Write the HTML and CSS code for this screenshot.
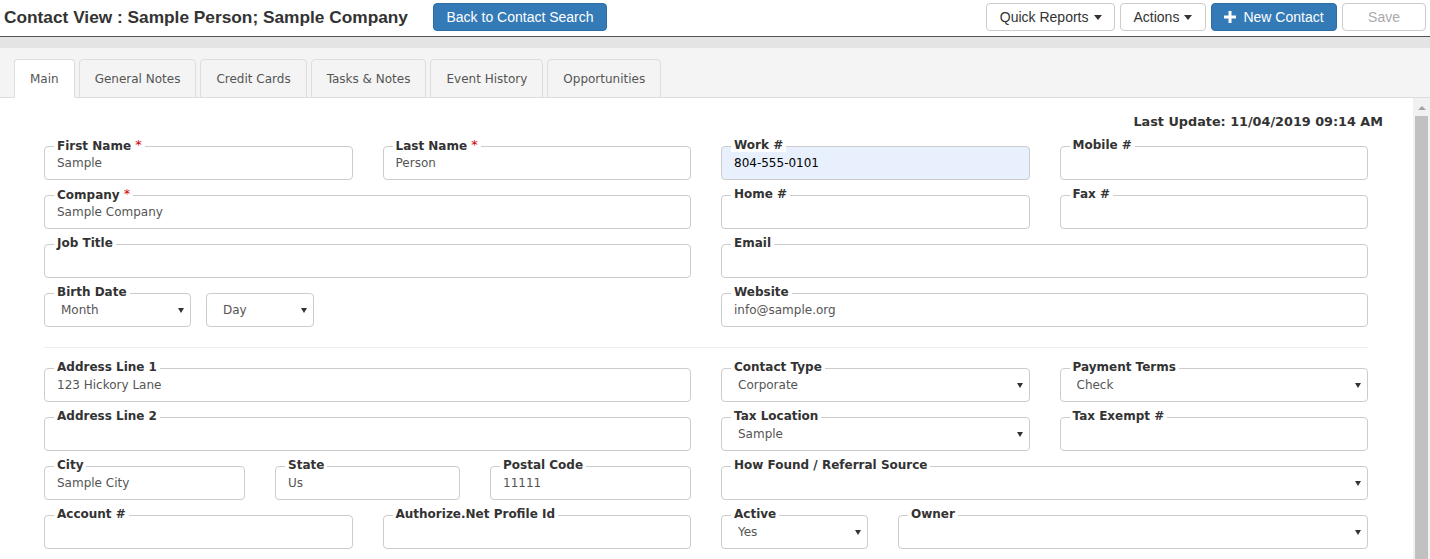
FILE: index.html
```html
<!DOCTYPE html>
<html lang="en">
<head>
    <meta charset="UTF-8">
    <meta name="viewport" content="width=device-width, initial-scale=1.0">
    <title>Contact View</title>
    <link rel="stylesheet" href="styles.css">
</head>
<body>

<div class="page">
    <header class="topbar">
        <div class="topbar-left">
            <h1 class="title">Contact View : Sample Person; Sample Company</h1>
            <button class="btn btn-primary">Back to Contact Search</button>
        </div>
        <div class="topbar-right">
            <button class="btn btn-default">Quick Reports <span class="caret"></span></button>
            <button class="btn btn-default">Actions <span class="caret"></span></button>
            <button class="btn btn-primary">
                <svg class="plus" width="12" height="12" viewBox="0 0 12 12"><path d="M4.5 0h3v4.5H12v3H7.5V12h-3V7.5H0v-3h4.5z" fill="#fff"/></svg>
                New Contact
            </button>
            <button class="btn btn-default btn-save" disabled>Save</button>
        </div>
    </header>

    <div class="band"></div>

    <nav class="tabs">
        <a class="tab active">Main</a>
        <a class="tab">General Notes</a>
        <a class="tab">Credit Cards</a>
        <a class="tab">Tasks &amp; Notes</a>
        <a class="tab">Event History</a>
        <a class="tab">Opportunities</a>
    </nav>

    <div class="body-row">
        <main class="content">
            <div class="last-update">Last Update: 11/04/2019 09:14 AM</div>

            <div class="cols">
                <div class="col">
                    <div class="row row-2">
                        <div class="field">
                            <label>First Name <span class="req">*</span></label>
                            <input class="control" type="text" value="Sample">
                        </div>
                        <div class="field">
                            <label>Last Name <span class="req">*</span></label>
                            <input class="control" type="text" value="Person">
                        </div>
                    </div>
                    <div class="row">
                        <div class="field">
                            <label>Company <span class="req">*</span></label>
                            <input class="control" type="text" value="Sample Company">
                        </div>
                    </div>
                    <div class="row">
                        <div class="field">
                            <label>Job Title</label>
                            <input class="control" type="text" value="">
                        </div>
                    </div>
                    <div class="row row-bd">
                        <div class="field select">
                            <label>Birth Date</label>
                            <select class="control"><option>Month</option></select>
                        </div>
                        <div class="field select">
                            <select class="control"><option>Day</option></select>
                        </div>
                    </div>
                </div>

                <div class="col">
                    <div class="row row-2">
                        <div class="field">
                            <label>Work #</label>
                            <input class="control autofill" type="text" value="804-555-0101">
                        </div>
                        <div class="field">
                            <label>Mobile #</label>
                            <input class="control" type="text" value="">
                        </div>
                    </div>
                    <div class="row row-2">
                        <div class="field">
                            <label>Home #</label>
                            <input class="control" type="text" value="">
                        </div>
                        <div class="field">
                            <label>Fax #</label>
                            <input class="control" type="text" value="">
                        </div>
                    </div>
                    <div class="row">
                        <div class="field">
                            <label>Email</label>
                            <input class="control" type="text" value="">
                        </div>
                    </div>
                    <div class="row">
                        <div class="field">
                            <label>Website</label>
                            <input class="control" type="text" value="info@sample.org">
                        </div>
                    </div>
                </div>
            </div>

            <hr class="divider">

            <div class="cols">
                <div class="col">
                    <div class="row">
                        <div class="field">
                            <label>Address Line 1</label>
                            <input class="control" type="text" value="123 Hickory Lane">
                        </div>
                    </div>
                    <div class="row">
                        <div class="field">
                            <label>Address Line 2</label>
                            <input class="control" type="text" value="">
                        </div>
                    </div>
                    <div class="row row-csz">
                        <div class="field">
                            <label>City</label>
                            <input class="control" type="text" value="Sample City">
                        </div>
                        <div class="field">
                            <label>State</label>
                            <input class="control" type="text" value="Us">
                        </div>
                        <div class="field">
                            <label>Postal Code</label>
                            <input class="control" type="text" value="11111">
                        </div>
                    </div>
                    <div class="row row-2">
                        <div class="field">
                            <label>Account #</label>
                            <input class="control" type="text" value="">
                        </div>
                        <div class="field">
                            <label>Authorize.Net Profile Id</label>
                            <input class="control" type="text" value="">
                        </div>
                    </div>
                </div>

                <div class="col">
                    <div class="row row-2">
                        <div class="field select">
                            <label>Contact Type</label>
                            <select class="control"><option>Corporate</option></select>
                        </div>
                        <div class="field select">
                            <label>Payment Terms</label>
                            <select class="control"><option>Check</option></select>
                        </div>
                    </div>
                    <div class="row row-2">
                        <div class="field select">
                            <label>Tax Location</label>
                            <select class="control"><option>Sample</option></select>
                        </div>
                        <div class="field">
                            <label>Tax Exempt #</label>
                            <input class="control" type="text" value="">
                        </div>
                    </div>
                    <div class="row">
                        <div class="field select">
                            <label>How Found / Referral Source</label>
                            <select class="control"><option></option></select>
                        </div>
                    </div>
                    <div class="row row-active">
                        <div class="field select">
                            <label>Active</label>
                            <select class="control"><option>Yes</option></select>
                        </div>
                        <div class="field select">
                            <label>Owner</label>
                            <select class="control"><option></option></select>
                        </div>
                    </div>
                </div>
            </div>
        </main>

        <div class="scrollbar">
            <span class="sb-up"></span>
            <span class="sb-thumb"></span>
        </div>
    </div>
</div>

</body>
</html>
```

FILE: styles.css
```css
html, body {
    margin: 0;
    height: 100%;
    overflow: hidden;
}
body {
    font-family: "DejaVu Sans", Verdana, sans-serif;
    font-size: 12px;
    color: #333;
    background: #fff;
}
.page {
    display: flex;
    flex-direction: column;
    height: 100vh;
}

/* top bar */
.topbar {
    display: flex;
    justify-content: space-between;
    align-items: flex-start;
    height: 37px;
    box-sizing: border-box;
    padding: 3px 4px 0 4px;
    border-bottom: 1px solid #555;
    flex-shrink: 0;
}
.topbar-left, .topbar-right {
    display: flex;
    align-items: center;
}
.topbar-right { gap: 5px; }
.title {
    margin: 0 25px 0 0;
    font-family: "Liberation Sans", Arial, sans-serif;
    font-size: 17.3px;
    font-weight: bold;
    line-height: 28px;
    color: #333;
}
.btn {
    font-family: "Liberation Sans", Arial, sans-serif;
    font-size: 14px;
    height: 28px;
    padding: 0 12.5px;
    border: 1px solid #ccc;
    border-radius: 4px;
    background: #fff;
    color: #333;
    display: inline-flex;
    align-items: center;
    cursor: pointer;
}
.btn-primary {
    background: #337ab7;
    border-color: #2e6da4;
    color: #fff;
}
.btn-save {
    padding: 0 25px;
    color: #aaa;
    border-color: #ccc;
    cursor: not-allowed;
}
.caret {
    display: inline-block;
    width: 0;
    height: 0;
    margin-left: 5px;
    border-top: 5px solid #333;
    border-left: 4px solid transparent;
    border-right: 4px solid transparent;
}
.plus { margin-right: 7px; }

.band {
    height: 11px;
    background: #e4e4e4;
    flex-shrink: 0;
}

/* tabs */
.tabs {
    display: flex;
    gap: 4px;
    height: 50px;
    box-sizing: border-box;
    padding: 11px 0 0 14px;
    background: #f4f4f4;
    border-bottom: 1px solid #ddd;
    flex-shrink: 0;
}
.tab {
    display: flex;
    align-items: center;
    height: 39px;
    box-sizing: border-box;
    padding: 0 15px;
    margin-bottom: -1px;
    border: 1px solid #ddd;
    border-radius: 4px 4px 0 0;
    background: #f4f4f4;
    color: #555;
    cursor: pointer;
}
.tab.active {
    background: #fff;
    border-bottom-color: #fff;
}

/* body */
.body-row {
    display: flex;
    flex: 1;
    min-height: 0;
    overflow: hidden;
}
.content {
    flex: 1;
    padding: 15px 45px 0 44px;
    background: #fff;
}
.last-update {
    text-align: right;
    font-size: 12.8px;
    font-weight: bold;
    line-height: 18px;
    margin: 0 -15px 15px 0;
}
.cols {
    display: grid;
    grid-template-columns: 1fr 1fr;
    gap: 30px;
}
.row {
    display: grid;
    grid-template-columns: 1fr;
    gap: 30px;
    margin-bottom: 15px;
}
.row-2 { grid-template-columns: 1fr 1fr; }
.row-bd { grid-template-columns: 147px 108px; gap: 15px; }
.row-csz { grid-template-columns: 201px 185px 201px; }
.row-active { grid-template-columns: 147px 1fr; }

.field { position: relative; }
.field label {
    position: absolute;
    top: -8px;
    left: 10px;
    padding: 0 3px;
    line-height: 14px;
    background: #fff;
    font-weight: bold;
    color: #333;
    white-space: nowrap;
    z-index: 1;
}
.req {
    color: #c00;
    font-weight: normal;
    font-size: 13px;
    vertical-align: 1px;
}
.control {
    display: block;
    width: 100%;
    height: 34px;
    box-sizing: border-box;
    padding: 0 12px;
    border: 1px solid #ccc;
    border-radius: 4px;
    background: #fff;
    font-family: "DejaVu Sans", Verdana, sans-serif;
    font-size: 12px;
    color: #555;
    outline: none;
}
.control.autofill {
    background: #e8f0fe;
    color: #000;
}
select.control {
    appearance: none;
    -webkit-appearance: none;
    padding-left: 16px;
}
.select::after {
    content: "";
    position: absolute;
    right: 7px;
    top: 15px;
    border-top: 5px solid #333;
    border-left: 3px solid transparent;
    border-right: 3px solid transparent;
    pointer-events: none;
}
.divider {
    border: 0;
    border-top: 1px solid #eee;
    margin: 5px 0 20px 0;
}

/* drawn scrollbar */
.scrollbar {
    width: 17px;
    flex-shrink: 0;
    background: #f1f1f1;
    display: flex;
    flex-direction: column;
    align-items: center;
}
.sb-up {
    margin-top: 8px;
    width: 0;
    height: 0;
    border-bottom: 4px solid #a3a3a3;
    border-left: 4px solid transparent;
    border-right: 4px solid transparent;
}
.sb-thumb {
    margin-top: 6px;
    width: 13px;
    flex: 1;
    background: #c1c1c1;
}
```
